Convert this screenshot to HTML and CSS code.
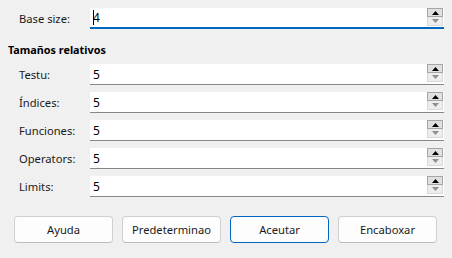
FILE: index.html
```html
<!DOCTYPE html>
<html>
<head>
<meta charset="utf-8">
<link rel="stylesheet" href="styles.css">
</head>
<body>
<div class="dialog">
  <div class="row base">
    <label class="lbl">Base size:</label>
    <div class="spin focused">
      <span class="val"><span class="caret"></span>4</span>
      <div class="arrows">
        <span class="up"><svg width="7" height="4" viewBox="0 0 7 4"><path d="M0 4 L3.5 0 L7 4 Z"/></svg></span>
        <span class="down"><svg width="7" height="4" viewBox="0 0 7 4"><path d="M0 0 L3.5 4 L7 0 Z"/></svg></span>
      </div>
    </div>
  </div>
  <div class="heading">Tamaños relativos</div>
  <div class="rows">
    <div class="row">
      <label class="lbl">Testu:</label>
      <div class="spin"><span class="val">5</span><div class="arrows"><span class="up"><svg width="7" height="4" viewBox="0 0 7 4"><path d="M0 4 L3.5 0 L7 4 Z"/></svg></span><span class="down"><svg width="7" height="4" viewBox="0 0 7 4"><path d="M0 0 L3.5 4 L7 0 Z"/></svg></span></div></div>
    </div>
    <div class="row">
      <label class="lbl">Índices:</label>
      <div class="spin"><span class="val">5</span><div class="arrows"><span class="up"><svg width="7" height="4" viewBox="0 0 7 4"><path d="M0 4 L3.5 0 L7 4 Z"/></svg></span><span class="down"><svg width="7" height="4" viewBox="0 0 7 4"><path d="M0 0 L3.5 4 L7 0 Z"/></svg></span></div></div>
    </div>
    <div class="row">
      <label class="lbl">Funciones:</label>
      <div class="spin"><span class="val">5</span><div class="arrows"><span class="up"><svg width="7" height="4" viewBox="0 0 7 4"><path d="M0 4 L3.5 0 L7 4 Z"/></svg></span><span class="down"><svg width="7" height="4" viewBox="0 0 7 4"><path d="M0 0 L3.5 4 L7 0 Z"/></svg></span></div></div>
    </div>
    <div class="row">
      <label class="lbl">Operators:</label>
      <div class="spin"><span class="val">5</span><div class="arrows"><span class="up"><svg width="7" height="4" viewBox="0 0 7 4"><path d="M0 4 L3.5 0 L7 4 Z"/></svg></span><span class="down"><svg width="7" height="4" viewBox="0 0 7 4"><path d="M0 0 L3.5 4 L7 0 Z"/></svg></span></div></div>
    </div>
    <div class="row">
      <label class="lbl">Limits:</label>
      <div class="spin"><span class="val">5</span><div class="arrows"><span class="up"><svg width="7" height="4" viewBox="0 0 7 4"><path d="M0 4 L3.5 0 L7 4 Z"/></svg></span><span class="down"><svg width="7" height="4" viewBox="0 0 7 4"><path d="M0 0 L3.5 4 L7 0 Z"/></svg></span></div></div>
    </div>
  </div>
  <div class="buttons">
    <button class="btn">Ayuda</button>
    <button class="btn">Predeterminao</button>
    <button class="btn default">Aceutar</button>
    <button class="btn">Encaboxar</button>
  </div>
</div>
</body>
</html>
```
FILE: styles.css
```css
html, body {
  margin: 0;
  padding: 0;
  background: #f0f0f0;
}
body {
  width: 452px;
  height: 258px;
  overflow: hidden;
  font-family: "Noto Sans", "Open Sans", sans-serif;
  font-size: 11.2px;
  color: #000;
}
.dialog {
  padding: 8px 8px 0 8px;
  display: flex;
  flex-direction: column;
}
.row {
  display: grid;
  grid-template-columns: 71px 354px;
  align-items: center;
  padding-left: 11px;
  height: 21px;
}
.lbl {
  color: #1a1a1a;
}
.heading {
  font-weight: bold;
  font-size: 10.8px;
  margin-top: 13px;
  height: 15px;
  line-height: 15px;
}
.rows {
  margin-top: 7px;
  display: flex;
  flex-direction: column;
  gap: 7px;
}
.spin {
  position: relative;
  height: 21px;
  box-sizing: border-box;
  background: #fff;
  border-bottom: 1px solid #878787;
  display: flex;
  align-items: center;
  justify-content: space-between;
}
.spin.focused {
  border-bottom: 2px solid #0067c0;
}
.val {
  padding-left: 3px;
  font-size: 12px;
  display: flex;
  align-items: center;
}
.caret {
  display: inline-block;
  width: 1px;
  height: 15px;
  background: #000;
  margin-right: -1px;
}
.arrows {
  display: flex;
  flex-direction: column;
  margin-right: 1px;
  align-self: flex-start;
}
.arrows span {
  width: 16px;
  height: 9px;
  display: flex;
  align-items: center;
  justify-content: center;
  box-sizing: border-box;
}
.up {
  background: #e0e0e0;
  border: 1px solid #a6a6a6;
}
.up svg path { fill: #000; }
.down {
  background: #ededed;
  border: 1px solid #d9d9d9;
  border-top: none;
}
.down svg path { fill: #8f8f8f; }
.buttons {
  margin-top: 19px;
  display: flex;
  gap: 9px;
  padding-left: 6px;
}
.btn {
  width: 99px;
  height: 27px;
  box-sizing: border-box;
  background: #fdfdfd;
  border: 1px solid #d0d0d0;
  border-bottom-color: #bcbcbc;
  border-radius: 4px;
  font-family: "Noto Sans", "Open Sans", sans-serif;
  font-size: 11.2px;
  color: #1a1a1a;
  padding: 0;
}
.btn.default {
  border: 1px solid #0067c0;
}
```
